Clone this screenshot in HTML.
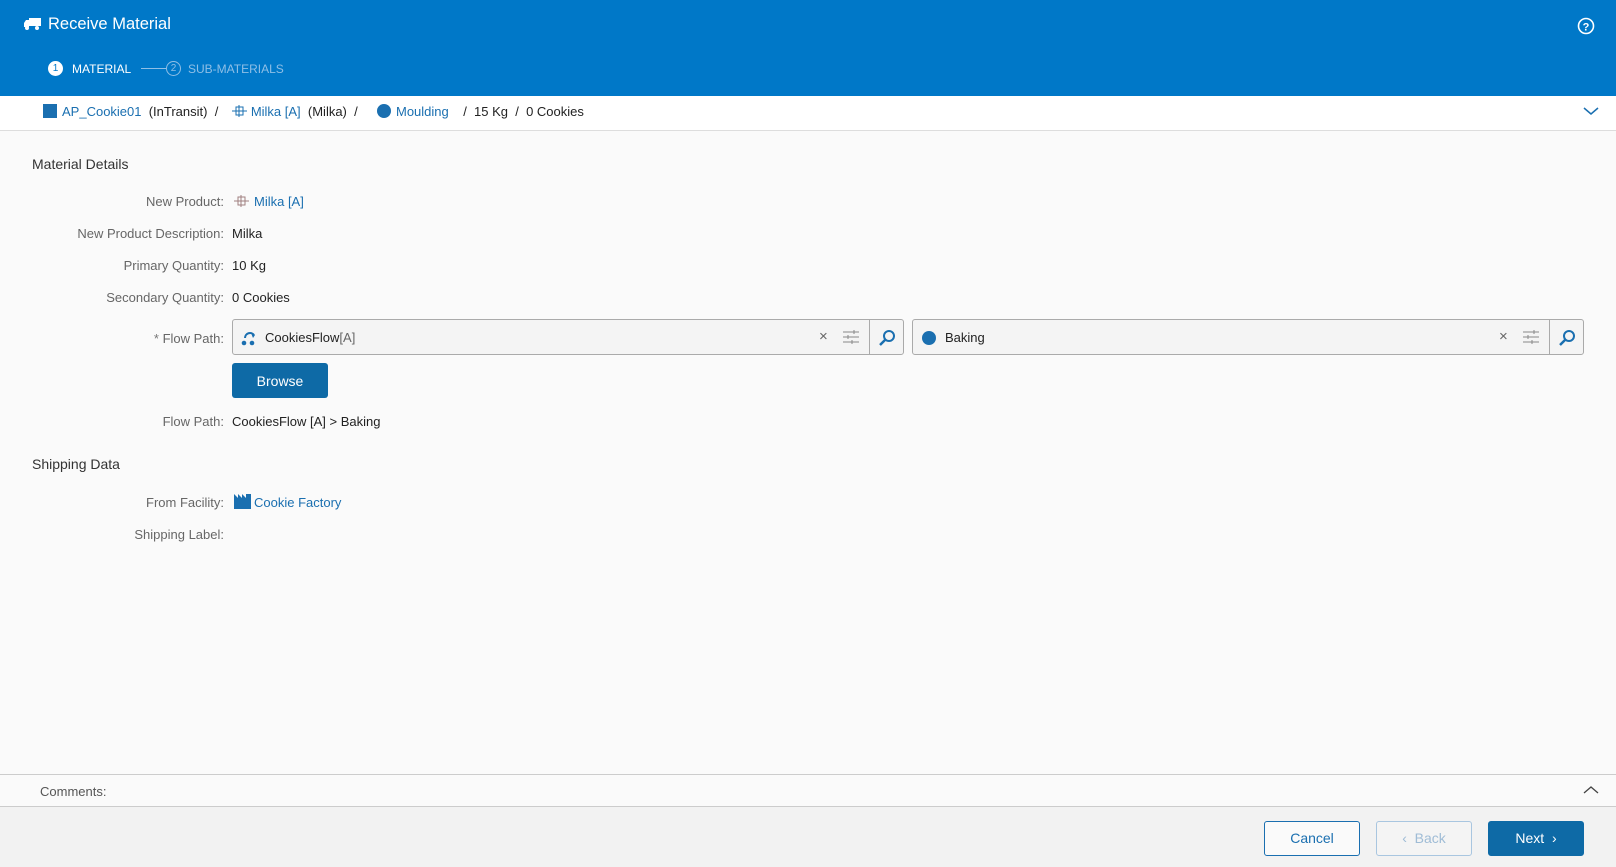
<!DOCTYPE html>
<html><head><meta charset="utf-8"><style>
*{box-sizing:border-box;margin:0;padding:0}
body{width:1616px;height:867px;overflow:hidden;background:#fafafa;font-family:"Liberation Sans",sans-serif;font-size:13px;color:#222;position:relative}
.abs{position:absolute}
.hdr{left:0;top:0;width:1616px;height:96px;background:#0078c8;color:#fff}
.link{color:#1a6fb0}
.lbl{position:absolute;right:1392px;color:#666;text-align:right;white-space:nowrap}
.val{position:absolute;left:232px;white-space:nowrap}
.inp{position:absolute;top:319px;height:36px;border:1px solid #aaa;border-radius:3px;background:#f4f4f4}
.btn{position:absolute;top:821px;width:96px;height:35px;border-radius:3px;font-size:14px;text-align:center;line-height:33px}
</style></head><body>
<div class="abs hdr">
 <svg class="abs" style="left:24px;top:18px" width="17" height="12" viewBox="0 0 17 12"><rect x="5" y="0" width="12" height="8" fill="#fff"/><path d="M0 5 L2 2 H5 V9 H0Z" fill="#fff"/><circle cx="3" cy="10" r="2" fill="#fff"/><circle cx="13" cy="10" r="2" fill="#fff"/></svg>
 <div class="abs" style="left:48px;top:15px;font-size:16.5px">Receive Material</div>
 <svg class="abs" style="left:1577px;top:17px" width="18" height="18" viewBox="0 0 18 18"><circle cx="9" cy="9" r="7.5" stroke="#fff" stroke-width="1.6" fill="none"/><text x="9" y="13.5" text-anchor="middle" fill="#fff" font-size="11" font-weight="bold" font-family="Liberation Sans">?</text></svg>
 <div class="abs" style="left:48px;top:61px;width:15px;height:15px;border-radius:50%;background:#fff;color:#0078c8;font-size:10px;text-align:center;line-height:15px">1</div>
 <div class="abs" style="left:72px;top:62px;font-size:12px">MATERIAL</div>
 <div class="abs" style="left:141px;top:68px;width:25px;height:1px;background:#8fbfe6"></div>
 <div class="abs" style="left:166px;top:61px;width:15px;height:15px;border-radius:50%;border:1px solid #8fbfe6;color:#8fbfe6;font-size:10px;text-align:center;line-height:13px">2</div>
 <div class="abs" style="left:188px;top:62px;font-size:12px;color:#8fbfe6">SUB-MATERIALS</div>
</div>
<div class="abs" style="left:0;top:96px;width:1616px;height:35px;border-bottom:1px solid #ddd;background:#fff"></div>
<div class="abs" style="left:43px;top:104px;width:14px;height:14px;background:#1a6fb0"></div>
<div class="abs" style="left:62px;top:104px;white-space:nowrap"><span class="link">AP_Cookie01</span>&nbsp;&nbsp;(InTransit) &nbsp;/&nbsp;&nbsp;&nbsp;&nbsp;&nbsp;&nbsp;&nbsp;&nbsp;&nbsp;<span class="link">Milka [A]</span>&nbsp;&nbsp;(Milka) &nbsp;/</div>
<svg class="abs" style="left:231px;top:104px" width="17" height="14" viewBox="0 0 17 14"><path d="M1 7H16M5 3H12V11H5ZM8 1V13" stroke="#1a6fb0" fill="none"/></svg>
<div class="abs" style="left:377px;top:104px;width:14px;height:14px;border-radius:50%;background:#1a6fb0"></div>
<div class="abs" style="left:396px;top:104px;white-space:nowrap"><span class="link">Moulding</span>&nbsp;&nbsp;&nbsp;&nbsp;/&nbsp;&nbsp;15 Kg&nbsp;&nbsp;/&nbsp;&nbsp;0 Cookies</div>
<svg class="abs" style="left:1583px;top:106px" width="16" height="10" viewBox="0 0 16 10"><path d="M1 2L8 8L15 2" stroke="#1a6fb0" stroke-width="1.5" fill="none"/></svg>

<div class="abs" style="left:32px;top:156px;font-size:14px;color:#333">Material Details</div>
<div class="lbl" style="top:194px">New Product:</div>
<svg class="abs" style="left:233px;top:194px" width="17" height="14" viewBox="0 0 17 14"><path d="M1 7H16M5 3H12V11H5ZM8 1V13" stroke="#a08080" fill="none"/></svg>
<div class="val link" style="left:254px;top:194px">Milka [A]</div>
<div class="lbl" style="top:226px">New Product Description:</div><div class="val" style="top:226px">Milka</div>
<div class="lbl" style="top:258px">Primary Quantity:</div><div class="val" style="top:258px">10&nbsp;Kg</div>
<div class="lbl" style="top:290px">Secondary Quantity:</div><div class="val" style="top:290px">0&nbsp;Cookies</div>
<div class="lbl" style="top:331px"><span style="color:#777">*</span>&nbsp;Flow Path:</div>
<div class="inp" style="left:232px;width:672px">
 <svg class="abs" style="left:8px;top:10px" width="16" height="16" viewBox="0 0 16 16"><path d="M4 8 A5 5 0 0 1 13 5" stroke="#1a6fb0" stroke-width="2" fill="none"/><path d="M10 3L14 5L12 8Z" fill="#1a6fb0"/><circle cx="3" cy="13" r="2.3" fill="#1a6fb0"/><circle cx="11" cy="13" r="2.3" fill="#1a6fb0"/></svg>
 <div class="abs" style="left:32px;top:10px">CookiesFlow<span style="color:#666">[A]</span></div>
 <div class="abs" style="left:586px;top:8px;color:#666;font-size:15px">×</div>
 <svg class="abs" style="left:610px;top:10px" width="16" height="14" viewBox="0 0 16 14"><path d="M0 2H16M0 7H16M0 12H16M11 0V4M5 5V9M9 10V14" stroke="#888" fill="none"/></svg>
 <div class="abs" style="left:636px;top:0;width:1px;height:34px;background:#aaa"></div>
 <svg class="abs" style="left:645px;top:9px" width="18" height="18" viewBox="0 0 18 18"><circle cx="11" cy="7" r="5" stroke="#1a6fb0" stroke-width="2" fill="none"/><path d="M7.5 10.5L2 16" stroke="#1a6fb0" stroke-width="2.5"/></svg>
</div>
<div class="inp" style="left:912px;width:672px">
 <div class="abs" style="left:9px;top:11px;width:14px;height:14px;border-radius:50%;background:#1a6fb0"></div>
 <div class="abs" style="left:32px;top:10px">Baking</div>
 <div class="abs" style="left:586px;top:8px;color:#666;font-size:15px">×</div>
 <svg class="abs" style="left:610px;top:10px" width="16" height="14" viewBox="0 0 16 14"><path d="M0 2H16M0 7H16M0 12H16M11 0V4M5 5V9M9 10V14" stroke="#888" fill="none"/></svg>
 <div class="abs" style="left:636px;top:0;width:1px;height:34px;background:#aaa"></div>
 <svg class="abs" style="left:645px;top:9px" width="18" height="18" viewBox="0 0 18 18"><circle cx="11" cy="7" r="5" stroke="#1a6fb0" stroke-width="2" fill="none"/><path d="M7.5 10.5L2 16" stroke="#1a6fb0" stroke-width="2.5"/></svg>
</div>
<div class="abs" style="left:232px;top:363px;width:96px;height:35px;background:#0e6aa6;border-radius:3px;color:#fff;font-size:14px;text-align:center;line-height:36px">Browse</div>
<div class="lbl" style="top:414px">Flow Path:</div><div class="val" style="top:414px">CookiesFlow [A] &gt; Baking</div>

<div class="abs" style="left:32px;top:456px;font-size:14px;color:#333">Shipping Data</div>
<div class="lbl" style="top:495px">From Facility:</div>
<svg class="abs" style="left:234px;top:493px" width="17" height="16" viewBox="0 0 17 16"><path d="M0 16V1L4 5V1L8 5V1L12 5V1H17V16Z" fill="#1a6fb0"/></svg>
<div class="val link" style="left:254px;top:495px">Cookie Factory</div>
<div class="lbl" style="top:527px">Shipping Label:</div>

<div class="abs" style="left:0;top:774px;width:1616px;height:1px;background:#ccc"></div>
<div class="abs" style="left:40px;top:784px;color:#555">Comments:</div>
<svg class="abs" style="left:1583px;top:785px" width="16" height="10" viewBox="0 0 16 10"><path d="M1 8L8 2L15 8" stroke="#444" stroke-width="1.3" fill="none"/></svg>
<div class="abs" style="left:0;top:806px;width:1616px;height:61px;background:#f2f2f2;border-top:1px solid #ccc"></div>
<div class="btn" style="left:1264px;border:1px solid #1a6fb0;color:#1a6fb0;background:#fafafa">Cancel</div>
<div class="btn" style="left:1376px;border:1px solid #a9c6e0;color:#9fbcd6;background:#f4f4f4">&lsaquo;&nbsp; Back</div>
<div class="btn" style="left:1488px;background:#0e6aa6;color:#fff;border:1px solid #0e6aa6">Next &nbsp;&rsaquo;</div>
</body></html>
